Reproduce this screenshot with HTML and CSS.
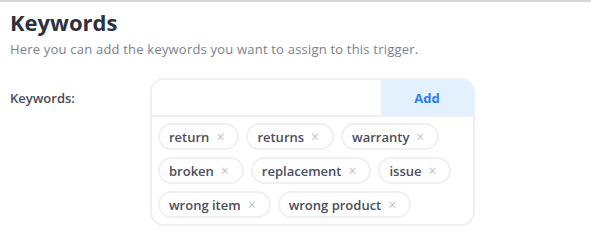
FILE: index.html
```html
<!DOCTYPE html>
<html lang="en">
<head>
    <meta charset="UTF-8">
    <meta name="viewport" content="width=device-width, initial-scale=1.0">
    <title>Keywords</title>
    <link rel="stylesheet" href="styles.css">
</head>
<body>

    <div class="section">
        <h2 class="title">Keywords</h2>
        <p class="desc">Here you can add the keywords you want to assign to this trigger.</p>

        <div class="field">
            <label class="label" for="keyword">Keywords:</label>
            <div class="box">
                <div class="entry">
                    <input class="input" id="keyword" type="text">
                    <button class="add" type="button">Add</button>
                </div>
                <div class="tags">
                    <span class="tag">return <span class="x">&times;</span></span>
                    <span class="tag">returns <span class="x">&times;</span></span>
                    <span class="tag">warranty <span class="x">&times;</span></span>
                    <span class="tag">broken <span class="x">&times;</span></span>
                    <span class="tag">replacement <span class="x">&times;</span></span>
                    <span class="tag">issue <span class="x">&times;</span></span>
                    <span class="tag">wrong item <span class="x">&times;</span></span>
                    <span class="tag">wrong product <span class="x">&times;</span></span>
                </div>
            </div>
        </div>
    </div>

</body>
</html>
```

FILE: styles.css
```css
body {
    margin: 0;
    background: #fff;
    font-family: "Open Sans", "Noto Sans", sans-serif;
    border-top: 2px solid #d6d6d6;
}

.section {
    padding: 6px 10px;
}

.title {
    margin: 0;
    font-size: 22px;
    font-weight: 700;
    color: #2c3140;
    line-height: 28px;
}

.desc {
    margin: 4px 0 0;
    font-size: 13px;
    letter-spacing: 0.2px;
    color: #7b7f8c;
    line-height: 18px;
}

.field {
    display: flex;
    margin-top: 20px;
}

.label {
    width: 140px;
    padding-top: 11px;
    font-size: 13px;
    font-weight: 600;
    color: #474b57;
}

/* keyword box */
.box {
    width: 321px;
    border: 2px solid #f0f0f2;
    border-radius: 14px;
    overflow: hidden;
}

.entry {
    display: flex;
    height: 35px;
    border-bottom: 2px solid #f0f0f2;
}

.input {
    flex: 1;
    border: none;
    outline: none;
    padding: 0 12px;
    font-size: 13px;
}

.add {
    width: 92px;
    border: none;
    background: #e3f0fd;
    color: #2b7de9;
    font-family: inherit;
    font-size: 13px;
    font-weight: 700;
    cursor: pointer;
}

.tags {
    display: flex;
    flex-wrap: wrap;
    gap: 7px 7px;
    padding: 6px 6px 6px 6px;
}

.tag {
    display: inline-flex;
    align-items: center;
    height: 23px;
    padding: 0 13px 0 9px;
    border: 2px solid #f0f0f2;
    border-radius: 14px;
    font-size: 13px;
    font-weight: 600;
    color: #4a4e5c;
}

.x {
    margin-left: 7px;
    color: #a9acb5;
    font-weight: 300;
    font-size: 14px;
}
```
